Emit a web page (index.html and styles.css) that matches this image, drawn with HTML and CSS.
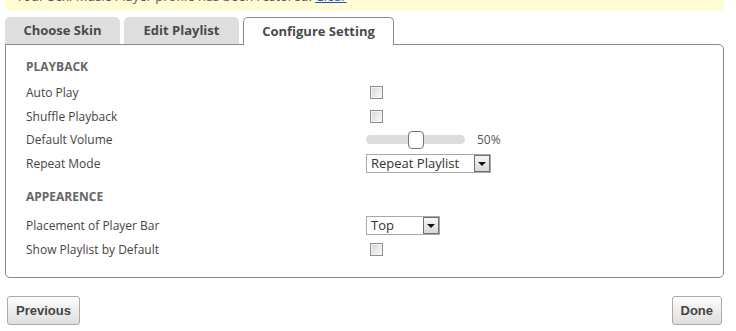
FILE: index.html
```html
<!DOCTYPE html>
<html lang="en">
<head>
    <meta charset="UTF-8">
    <title>Player Settings</title>
    <link rel="stylesheet" href="styles.css">
</head>
<body>

    <!-- Restore notice -->
    <div class="notice">
        Your Sexi Music Player profile has been restored. <a href="#">Clear</a>
    </div>

    <!-- Tabs -->
    <div class="tabs">
        <div class="tab">Choose Skin</div>
        <div class="tab">Edit Playlist</div>
        <div class="tab active">Configure Setting</div>
    </div>

    <div class="panel">
        <h3 class="section-title">PLAYBACK</h3>
        <div class="setting-row">
            <label>Auto Play</label>
            <input type="checkbox" class="check">
        </div>
        <div class="setting-row">
            <label>Shuffle Playback</label>
            <input type="checkbox" class="check">
        </div>
        <div class="setting-row">
            <label>Default Volume</label>
            <div class="volume">
                <div class="slider"><span class="thumb"></span></div>
                <span class="volume-value">50%</span>
            </div>
        </div>
        <div class="setting-row">
            <label>Repeat Mode</label>
            <div class="select select-wide">
                <span class="select-text">Repeat Playlist</span>
                <span class="select-arrow"></span>
            </div>
        </div>

        <h3 class="section-title second">APPEARENCE</h3>
        <div class="setting-row roomy">
            <label>Placement of Player Bar</label>
            <div class="select select-small">
                <span class="select-text">Top</span>
                <span class="select-arrow"></span>
            </div>
        </div>
        <div class="setting-row">
            <label>Show Playlist by Default</label>
            <input type="checkbox" class="check">
        </div>
    </div>

    <div class="actions">
        <button>Previous</button>
        <button>Done</button>
    </div>

</body>
</html>
```

FILE: styles.css
```css
body {
    font-family: 'Open Sans', sans-serif;
    background-color: #fff;
    margin: 0;
    padding: 0;
    color: #444;
}
.notice {
    margin: -17px 12px 0 5px;
    height: 28px;
    padding-left: 11px;
    background-color: #fffbd3;
    border-radius: 0 0 6px 6px;
    font-size: 13px;
    line-height: 26px;
    color: #555;
}
.notice a {
    color: #1c4fd8;
}
.tabs {
    display: flex;
    gap: 4px;
    margin: 6px 0 0 5px;
}
.tab {
    height: 27px;
    width: 115px;
    background-color: #dedede;
    border-radius: 5px 5px 0 0;
    font-size: 13px;
    font-weight: bold;
    line-height: 27px;
    text-align: center;
    color: #4a4a4a;
}
.tab.active {
    width: 149px;
    height: 27px;
    background-color: #fff;
    border: 1px solid #888;
    border-bottom: none;
    margin-bottom: -1px;
    position: relative;
    z-index: 1;
}
.panel {
    margin: 0 12px 0 5px;
    height: 232px;
    border: 1px solid #888;
    border-radius: 0 5px 5px 5px;
    padding: 0 20px;
}
.section-title {
    margin: 14px 0 6px;
    font-size: 12px;
    line-height: 16px;
    font-weight: bold;
    color: #666;
}
.section-title.second {
    margin-top: 14px;
    margin-bottom: 7px;
}
.setting-row {
    display: grid;
    grid-template-columns: 340px auto;
    align-items: center;
    height: 23.5px;
    font-size: 12px;
    color: #444;
}
.setting-row.roomy {
    height: 26px;
}
.check {
    appearance: none;
    margin: 0 0 0 4px;
    width: 13px;
    height: 13px;
    border: 1px solid #8f8f8f;
    background: linear-gradient(135deg, #d6d6d6, #fbfbfb);
    box-shadow: inset 0 0 0 1px #f4f4f4;
}
.volume {
    display: flex;
    align-items: center;
}
.slider {
    position: relative;
    width: 99px;
    height: 9px;
    background-color: #dcdcdc;
    border-radius: 5px;
}
.thumb {
    position: absolute;
    left: 42px;
    top: -4px;
    width: 14px;
    height: 16px;
    background-color: #fff;
    border: 1px solid #777;
    border-radius: 4px;
}
.volume-value {
    margin-left: 12px;
    color: #555;
}
.select {
    display: flex;
    align-items: center;
    justify-content: space-between;
    height: 19px;
    border: 1px solid #a9a9a9;
    box-sizing: border-box;
    font-size: 13px;
    color: #333;
}
.select-wide {
    width: 125px;
}
.select-small {
    width: 74px;
}
.select-text {
    padding-left: 4px;
    line-height: 16px;
}
.select-arrow {
    position: relative;
    width: 16px;
    height: 17px;
    border: 1px solid #6f6f6f;
    box-sizing: border-box;
    background: linear-gradient(#f6f6f6, #d8d8d8);
}
.select-arrow::after {
    content: '';
    position: absolute;
    left: 3px;
    top: 6px;
    border-left: 4px solid transparent;
    border-right: 4px solid transparent;
    border-top: 4px solid #111;
}
.actions {
    display: flex;
    justify-content: space-between;
    margin: 18px 14px 0 7px;
}
button {
    font-family: 'Liberation Sans', Arial, sans-serif;
    font-size: 13px;
    font-weight: bold;
    color: #444;
    height: 29px;
    padding: 0 8px;
    border: 1px solid #aaa;
    border-radius: 3px;
    background: linear-gradient(#fdfdfd, #dedede);
    cursor: pointer;
}
```
